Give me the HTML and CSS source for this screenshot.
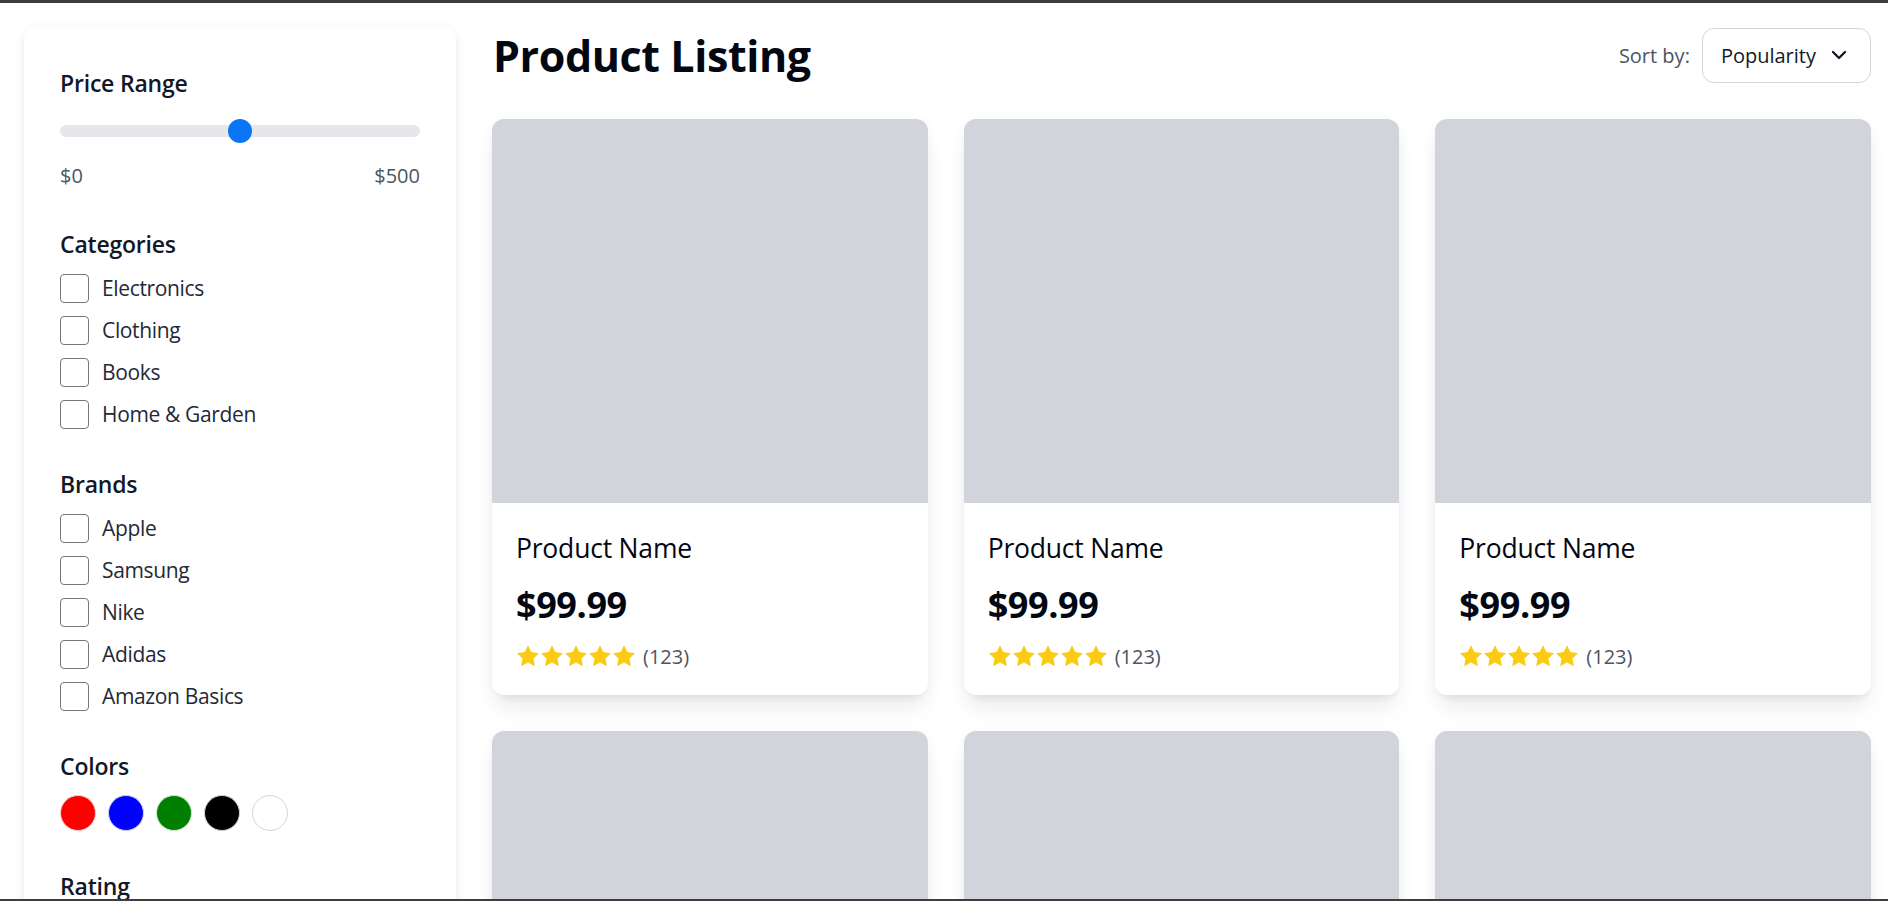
FILE: index.html
```html
<!DOCTYPE html>
<html lang="en">
<head>
<meta charset="utf-8">
<title>Product Listing</title>
<link rel="stylesheet" href="styles.css">
</head>
<body>
<div class="screen-frame"></div>
<div class="layout">
  <aside class="sidebar">
    <section class="filter filter-price">
      <h3 class="filter-title filter-title-first">Price Range</h3>
      <div class="slider">
        <div class="slider-track"><div class="slider-thumb"></div></div>
      </div>
      <div class="range-labels"><span>$0</span><span>$500</span></div>
    </section>

    <section class="filter">
      <h3 class="filter-title">Categories</h3>
      <ul class="check-list">
        <li class="check-row"><span class="checkbox"></span><span class="check-label">Electronics</span></li>
        <li class="check-row"><span class="checkbox"></span><span class="check-label">Clothing</span></li>
        <li class="check-row"><span class="checkbox"></span><span class="check-label">Books</span></li>
        <li class="check-row"><span class="checkbox"></span><span class="check-label">Home &amp; Garden</span></li>
      </ul>
    </section>

    <section class="filter">
      <h3 class="filter-title">Brands</h3>
      <ul class="check-list">
        <li class="check-row"><span class="checkbox"></span><span class="check-label">Apple</span></li>
        <li class="check-row"><span class="checkbox"></span><span class="check-label">Samsung</span></li>
        <li class="check-row"><span class="checkbox"></span><span class="check-label">Nike</span></li>
        <li class="check-row"><span class="checkbox"></span><span class="check-label">Adidas</span></li>
        <li class="check-row"><span class="checkbox"></span><span class="check-label">Amazon Basics</span></li>
      </ul>
    </section>

    <section class="filter">
      <h3 class="filter-title">Colors</h3>
      <div class="swatches">
        <span class="swatch swatch-red"></span>
        <span class="swatch swatch-blue"></span>
        <span class="swatch swatch-green"></span>
        <span class="swatch swatch-black"></span>
        <span class="swatch swatch-white"></span>
      </div>
    </section>

    <section class="filter">
      <h3 class="filter-title">Rating</h3>
      <ul class="check-list">
        <li class="check-row"><span class="checkbox"></span><span class="check-label">4 stars &amp; up</span></li>
        <li class="check-row"><span class="checkbox"></span><span class="check-label">3 stars &amp; up</span></li>
      </ul>
    </section>
  </aside>

  <main class="main">
    <header class="main-header">
      <h1 class="page-title">Product Listing</h1>
      <div class="sort">
        <span class="sort-label">Sort by:</span>
        <div class="select">
          <span class="select-value">Popularity</span>
          <svg class="chevron" width="16" height="10" viewBox="0 0 16 10"><path d="M2 2 L8 8 L14 2" fill="none" stroke="#111827" stroke-width="2.3" stroke-linecap="round" stroke-linejoin="round"/></svg>
        </div>
      </div>
    </header>

    <div class="grid">
      <article class="card">
        <div class="card-image"></div>
        <div class="card-body">
          <div class="card-name">Product Name</div>
          <div class="card-price">$99.99</div>
          <div class="card-rating">
            <span class="stars">
              <svg width="24" height="24" viewBox="0 0 24 24"><path d="M12 1.2l3.4 6.9 7.6 1.1-5.5 5.4 1.3 7.6L12 18.6l-6.8 3.6 1.3-7.6L1 9.2l7.6-1.1z"/></svg><svg width="24" height="24" viewBox="0 0 24 24"><path d="M12 1.2l3.4 6.9 7.6 1.1-5.5 5.4 1.3 7.6L12 18.6l-6.8 3.6 1.3-7.6L1 9.2l7.6-1.1z"/></svg><svg width="24" height="24" viewBox="0 0 24 24"><path d="M12 1.2l3.4 6.9 7.6 1.1-5.5 5.4 1.3 7.6L12 18.6l-6.8 3.6 1.3-7.6L1 9.2l7.6-1.1z"/></svg><svg width="24" height="24" viewBox="0 0 24 24"><path d="M12 1.2l3.4 6.9 7.6 1.1-5.5 5.4 1.3 7.6L12 18.6l-6.8 3.6 1.3-7.6L1 9.2l7.6-1.1z"/></svg><svg width="24" height="24" viewBox="0 0 24 24"><path d="M12 1.2l3.4 6.9 7.6 1.1-5.5 5.4 1.3 7.6L12 18.6l-6.8 3.6 1.3-7.6L1 9.2l7.6-1.1z"/></svg>
            </span>
            <span class="count">(123)</span>
          </div>
        </div>
      </article>
      <article class="card">
        <div class="card-image"></div>
        <div class="card-body">
          <div class="card-name">Product Name</div>
          <div class="card-price">$99.99</div>
          <div class="card-rating">
            <span class="stars">
              <svg width="24" height="24" viewBox="0 0 24 24"><path d="M12 1.2l3.4 6.9 7.6 1.1-5.5 5.4 1.3 7.6L12 18.6l-6.8 3.6 1.3-7.6L1 9.2l7.6-1.1z"/></svg><svg width="24" height="24" viewBox="0 0 24 24"><path d="M12 1.2l3.4 6.9 7.6 1.1-5.5 5.4 1.3 7.6L12 18.6l-6.8 3.6 1.3-7.6L1 9.2l7.6-1.1z"/></svg><svg width="24" height="24" viewBox="0 0 24 24"><path d="M12 1.2l3.4 6.9 7.6 1.1-5.5 5.4 1.3 7.6L12 18.6l-6.8 3.6 1.3-7.6L1 9.2l7.6-1.1z"/></svg><svg width="24" height="24" viewBox="0 0 24 24"><path d="M12 1.2l3.4 6.9 7.6 1.1-5.5 5.4 1.3 7.6L12 18.6l-6.8 3.6 1.3-7.6L1 9.2l7.6-1.1z"/></svg><svg width="24" height="24" viewBox="0 0 24 24"><path d="M12 1.2l3.4 6.9 7.6 1.1-5.5 5.4 1.3 7.6L12 18.6l-6.8 3.6 1.3-7.6L1 9.2l7.6-1.1z"/></svg>
            </span>
            <span class="count">(123)</span>
          </div>
        </div>
      </article>
      <article class="card">
        <div class="card-image"></div>
        <div class="card-body">
          <div class="card-name">Product Name</div>
          <div class="card-price">$99.99</div>
          <div class="card-rating">
            <span class="stars">
              <svg width="24" height="24" viewBox="0 0 24 24"><path d="M12 1.2l3.4 6.9 7.6 1.1-5.5 5.4 1.3 7.6L12 18.6l-6.8 3.6 1.3-7.6L1 9.2l7.6-1.1z"/></svg><svg width="24" height="24" viewBox="0 0 24 24"><path d="M12 1.2l3.4 6.9 7.6 1.1-5.5 5.4 1.3 7.6L12 18.6l-6.8 3.6 1.3-7.6L1 9.2l7.6-1.1z"/></svg><svg width="24" height="24" viewBox="0 0 24 24"><path d="M12 1.2l3.4 6.9 7.6 1.1-5.5 5.4 1.3 7.6L12 18.6l-6.8 3.6 1.3-7.6L1 9.2l7.6-1.1z"/></svg><svg width="24" height="24" viewBox="0 0 24 24"><path d="M12 1.2l3.4 6.9 7.6 1.1-5.5 5.4 1.3 7.6L12 18.6l-6.8 3.6 1.3-7.6L1 9.2l7.6-1.1z"/></svg><svg width="24" height="24" viewBox="0 0 24 24"><path d="M12 1.2l3.4 6.9 7.6 1.1-5.5 5.4 1.3 7.6L12 18.6l-6.8 3.6 1.3-7.6L1 9.2l7.6-1.1z"/></svg>
            </span>
            <span class="count">(123)</span>
          </div>
        </div>
      </article>
      <article class="card">
        <div class="card-image"></div>
        <div class="card-body">
          <div class="card-name">Product Name</div>
          <div class="card-price">$99.99</div>
        </div>
      </article>
      <article class="card">
        <div class="card-image"></div>
        <div class="card-body">
          <div class="card-name">Product Name</div>
          <div class="card-price">$99.99</div>
        </div>
      </article>
      <article class="card">
        <div class="card-image"></div>
        <div class="card-body">
          <div class="card-name">Product Name</div>
          <div class="card-price">$99.99</div>
        </div>
      </article>
    </div>
  </main>
</div>
</body>
</html>
```

FILE: styles.css
```css
html, body {
  margin: 0;
  padding: 0;
}

body {
  font-family: "Open Sans", "Noto Sans", sans-serif;
  color: #111827;
  background: #ffffff;
  border-top: 3px solid #3d3d3d;
}

.screen-frame {
  position: fixed;
  left: 0;
  right: 0;
  bottom: 0;
  height: 2px;
  background: #3d3d3d;
  z-index: 10;
  pointer-events: none;
}

.layout {
  display: flex;
  align-items: flex-start;
  gap: 36px;
  padding: 24px 17px 24px 24px;
}

/* Sidebar */
.sidebar {
  flex: none;
  width: 432px;
  box-sizing: border-box;
  padding: 36px;
  background: #ffffff;
  border-radius: 12px;
  box-shadow: 0 6px 12px -2px rgba(0, 0, 0, 0.08), 0 3px 8px -3px rgba(0, 0, 0, 0.06), 0 0 14px rgba(0, 0, 0, 0.035);
}

.filter {
  margin-bottom: 37px;
}

.filter-price {
  margin-bottom: 35px;
}

.filter-title {
  margin: 0 0 11px;
  font-size: 23px;
  line-height: 36px;
  font-weight: 600;
  color: #111827;
  letter-spacing: -0.2px;
}

.filter-title-first {
  padding-top: 2px;
  margin-bottom: 8px;
}

.slider {
  height: 44px;
  display: flex;
  align-items: center;
}

.slider-track {
  position: relative;
  width: 100%;
  height: 12px;
  border-radius: 6px;
  background: #e5e7eb;
}

.slider-thumb {
  position: absolute;
  left: 50%;
  top: 50%;
  width: 24px;
  height: 24px;
  margin: -12px 0 0 -12px;
  border-radius: 50%;
  background: #0a76f6;
}

.range-labels {
  display: flex;
  justify-content: space-between;
  margin-top: 8px;
  font-size: 20px;
  line-height: 30px;
  color: #4b5563;
}

.check-list {
  list-style: none;
  margin: 0;
  padding: 0;
  display: flex;
  flex-direction: column;
  gap: 12px;
}

.check-row {
  display: flex;
  align-items: center;
  height: 30px;
}

.checkbox {
  width: 29px;
  height: 29px;
  box-sizing: border-box;
  border: 1.5px solid #767676;
  border-radius: 4px;
  background: #ffffff;
  flex: none;
}

.check-label {
  margin-left: 13px;
  font-size: 21px;
  line-height: 30px;
  color: #1f2937;
  letter-spacing: -0.35px;
}

.swatches {
  display: flex;
  gap: 12px;
}

.swatch {
  width: 36px;
  height: 36px;
  box-sizing: border-box;
  border-radius: 50%;
  border: 1px solid #e5e7eb;
}

.swatch-red { background: #ff0000; border-color: #f5d0d0; }
.swatch-blue { background: #0000ff; border-color: #d0d0f5; }
.swatch-green { background: #008000; border-color: #d0e5d0; }
.swatch-black { background: #000000; border-color: #cfcfcf; }
.swatch-white { background: #ffffff; border: 1.5px solid #d1d5db; }

/* Main */
.main {
  flex: 1;
  min-width: 0;
}

.main-header {
  display: flex;
  align-items: center;
  justify-content: space-between;
  height: 56px;
  margin-bottom: 36px;
}

.page-title {
  margin: 2px 0 0 1px;
  font-size: 43px;
  line-height: 54px;
  font-weight: 700;
  color: #030712;
  letter-spacing: -0.4px;
}

.sort {
  display: flex;
  align-items: center;
  gap: 12px;
}

.sort-label {
  font-size: 20px;
  color: #4b5563;
}

.select {
  display: flex;
  align-items: center;
  gap: 15px;
  height: 55px;
  box-sizing: border-box;
  padding: 0 23px 0 18px;
  border: 1.5px solid #d1d5db;
  border-radius: 12px;
  background: #ffffff;
}

.select-value {
  font-size: 20px;
  color: #111827;
}

.chevron {
  display: block;
}

.grid {
  display: grid;
  grid-template-columns: repeat(3, 1fr);
  gap: 36px;
}

.card {
  background: #ffffff;
  border-radius: 12px;
  overflow: hidden;
  box-shadow: 0 15px 22px -4px rgba(0, 0, 0, 0.09), 0 6px 9px -6px rgba(0, 0, 0, 0.09), 0 0 12px rgba(0, 0, 0, 0.03);
}

.card-image {
  height: 384px;
  background: #d1d5db;
}

.card-body {
  padding: 24px;
}

.card-name {
  font-size: 26.5px;
  line-height: 42px;
  font-weight: 500;
  color: #030712;
  letter-spacing: -0.2px;
}

.card-price {
  margin-top: 12px;
  font-size: 36px;
  line-height: 48px;
  font-weight: 700;
  color: #030712;
  letter-spacing: -0.4px;
}

.card-rating {
  display: flex;
  align-items: center;
  height: 30px;
  margin-top: 12px;
}

.stars {
  display: flex;
  fill: #facc15;
}

.stars svg {
  display: block;
}

.count {
  margin-left: 7px;
  font-size: 20px;
  color: #4b5563;
}
```
